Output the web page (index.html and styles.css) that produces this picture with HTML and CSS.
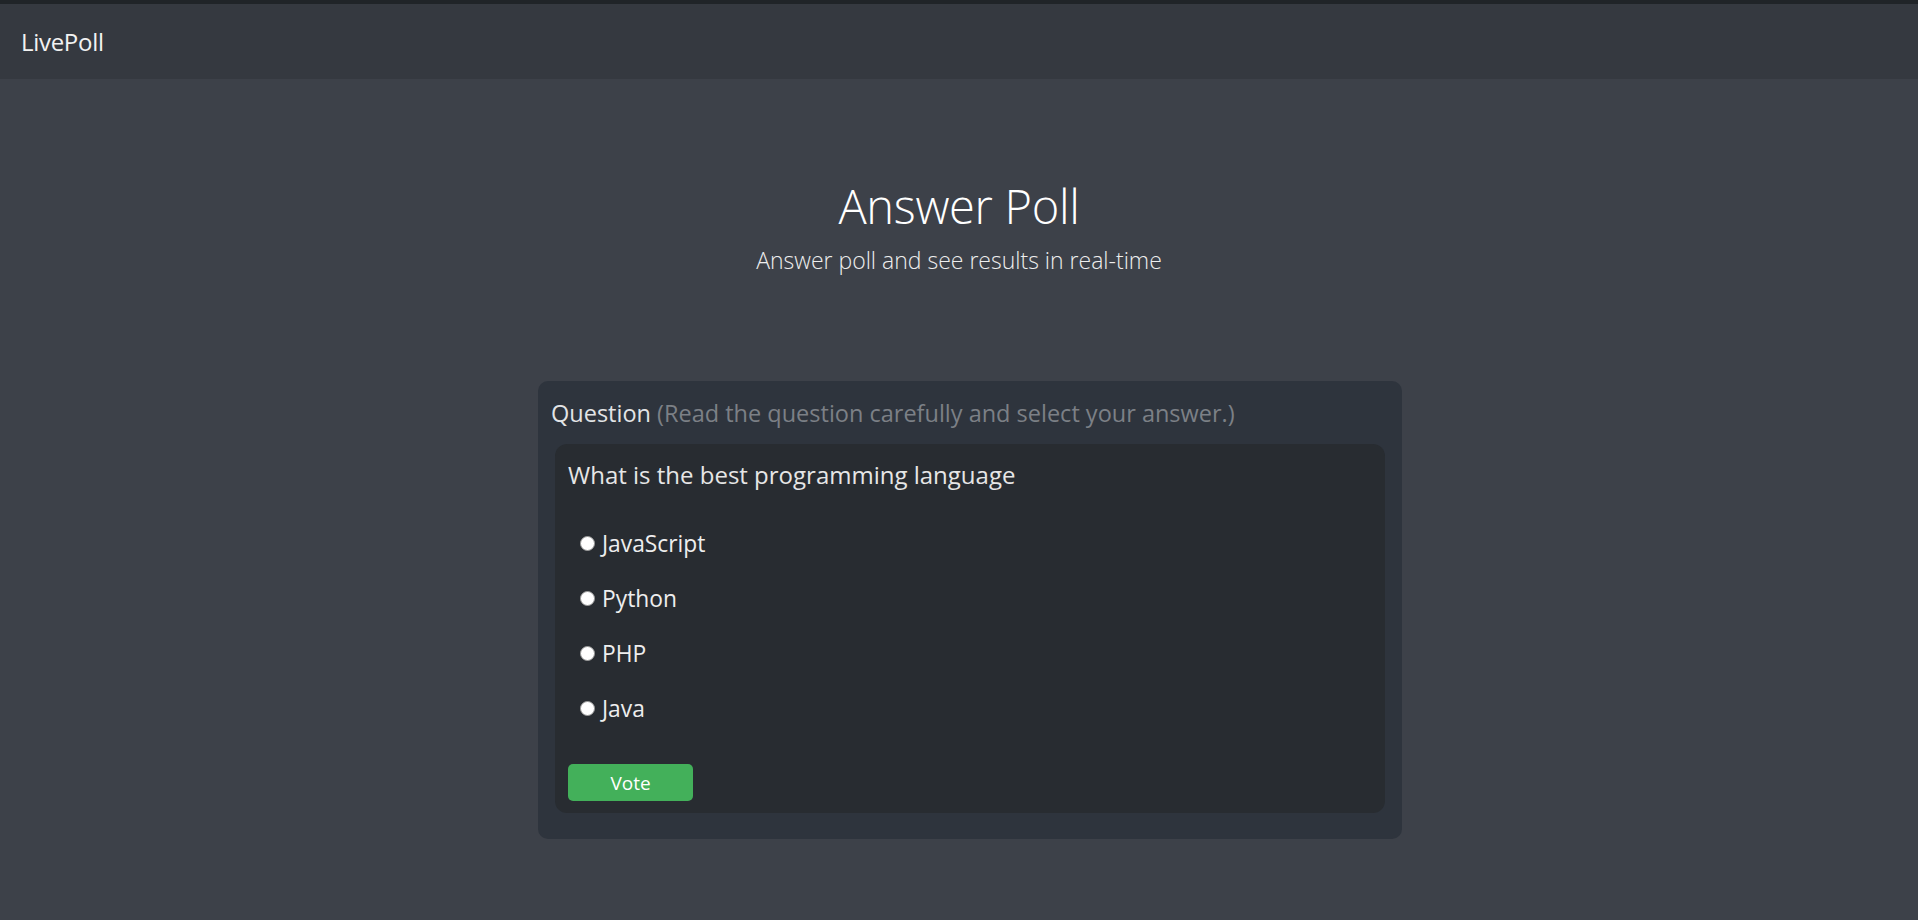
FILE: index.html
```html
<!DOCTYPE html>
<html lang="en">
<head>
<meta charset="utf-8">
<title>LivePoll</title>
<link rel="stylesheet" href="styles.css">
</head>
<body>
<nav class="navbar">
  <a class="brand" href="#">LivePoll</a>
</nav>
<main class="main">
  <header class="hero">
    <h1 class="hero-title">Answer Poll</h1>
    <p class="hero-lead">Answer poll and see results in real-time</p>
  </header>
  <section class="card">
    <h5 class="card-title">Question <span class="muted">(Read the question carefully and select your answer.)</span></h5>
    <div class="inner">
      <p class="question">What is the best programming language</p>
      <form class="options">
        <label class="option"><input type="radio" name="lang" class="radio"><span>JavaScript</span></label>
        <label class="option"><input type="radio" name="lang" class="radio"><span>Python</span></label>
        <label class="option"><input type="radio" name="lang" class="radio"><span>PHP</span></label>
        <label class="option"><input type="radio" name="lang" class="radio"><span>Java</span></label>
        <button type="button" class="vote">Vote</button>
      </form>
    </div>
  </section>
</main>
</body>
</html>
```
FILE: styles.css
```css
* { box-sizing: border-box; }
html, body { margin: 0; padding: 0; }
body {
  background: #3d4149;
  color: #e6e6e6;
  font-family: "Open Sans", "Noto Sans", sans-serif;
  height: 920px;
  overflow: hidden;
  border-top: 4px solid #202428;
}
.navbar {
  height: 75px;
  background: #353940;
  display: flex;
  align-items: center;
  padding: 0 21px;
}
.brand {
  color: #f2f2f2;
  text-decoration: none;
  font-size: 24px;
  letter-spacing: -0.3px;
}
.main {
  display: flex;
  flex-direction: column;
  align-items: center;
}
.hero { text-align: center; margin-top: 99px; }
.hero-title {
  margin: 0;
  font-weight: 300;
  font-size: 47px;
  line-height: 56px;
  color: #ffffff;
  letter-spacing: -0.3px;
}
.hero-lead {
  margin: 11px 0 0;
  font-weight: 300;
  font-size: 23px;
  line-height: 30px;
  color: #eeeeee;
}
.card {
  margin-top: 106px;
  margin-left: 22px;
  width: 864px;
  height: 458px;
  background: #2e343d;
  border-radius: 10px;
  padding: 15px 17px 26px 17px;
  display: flex;
  flex-direction: column;
}
.card-title {
  margin: 0 0 0 -4px;
  font-size: 23.5px;
  font-weight: 400;
  line-height: 35px;
  color: #e2e4e6;
}
.muted { color: #7c8086; }
.inner {
  margin-top: 13px;
  flex: 1;
  background: #282c31;
  border-radius: 12px;
  padding: 16px 13px 12px;
}
.question {
  margin: 0;
  font-size: 24px;
  line-height: 30px;
  color: #e6e6e6;
}
.options {
  display: flex;
  flex-direction: column;
  margin-top: 25.5px;
}
.option {
  display: flex;
  align-items: center;
  height: 55px;
  padding-left: 12px;
  font-size: 22.8px;
  color: #eeeeee;
}
.radio {
  appearance: none;
  width: 15px;
  height: 15px;
  margin: 0 7px 0 0;
  border-radius: 50%;
  background: #ffffff;
  border: 1px solid #9a9a9a;
}
.vote {
  align-self: flex-start;
  margin-top: 28.5px;
  width: 125px;
  height: 37px;
  border: none;
  border-radius: 5px;
  background: #43b05a;
  color: #ffffff;
  font-family: inherit;
  font-size: 19px;
  cursor: pointer;
}
```
